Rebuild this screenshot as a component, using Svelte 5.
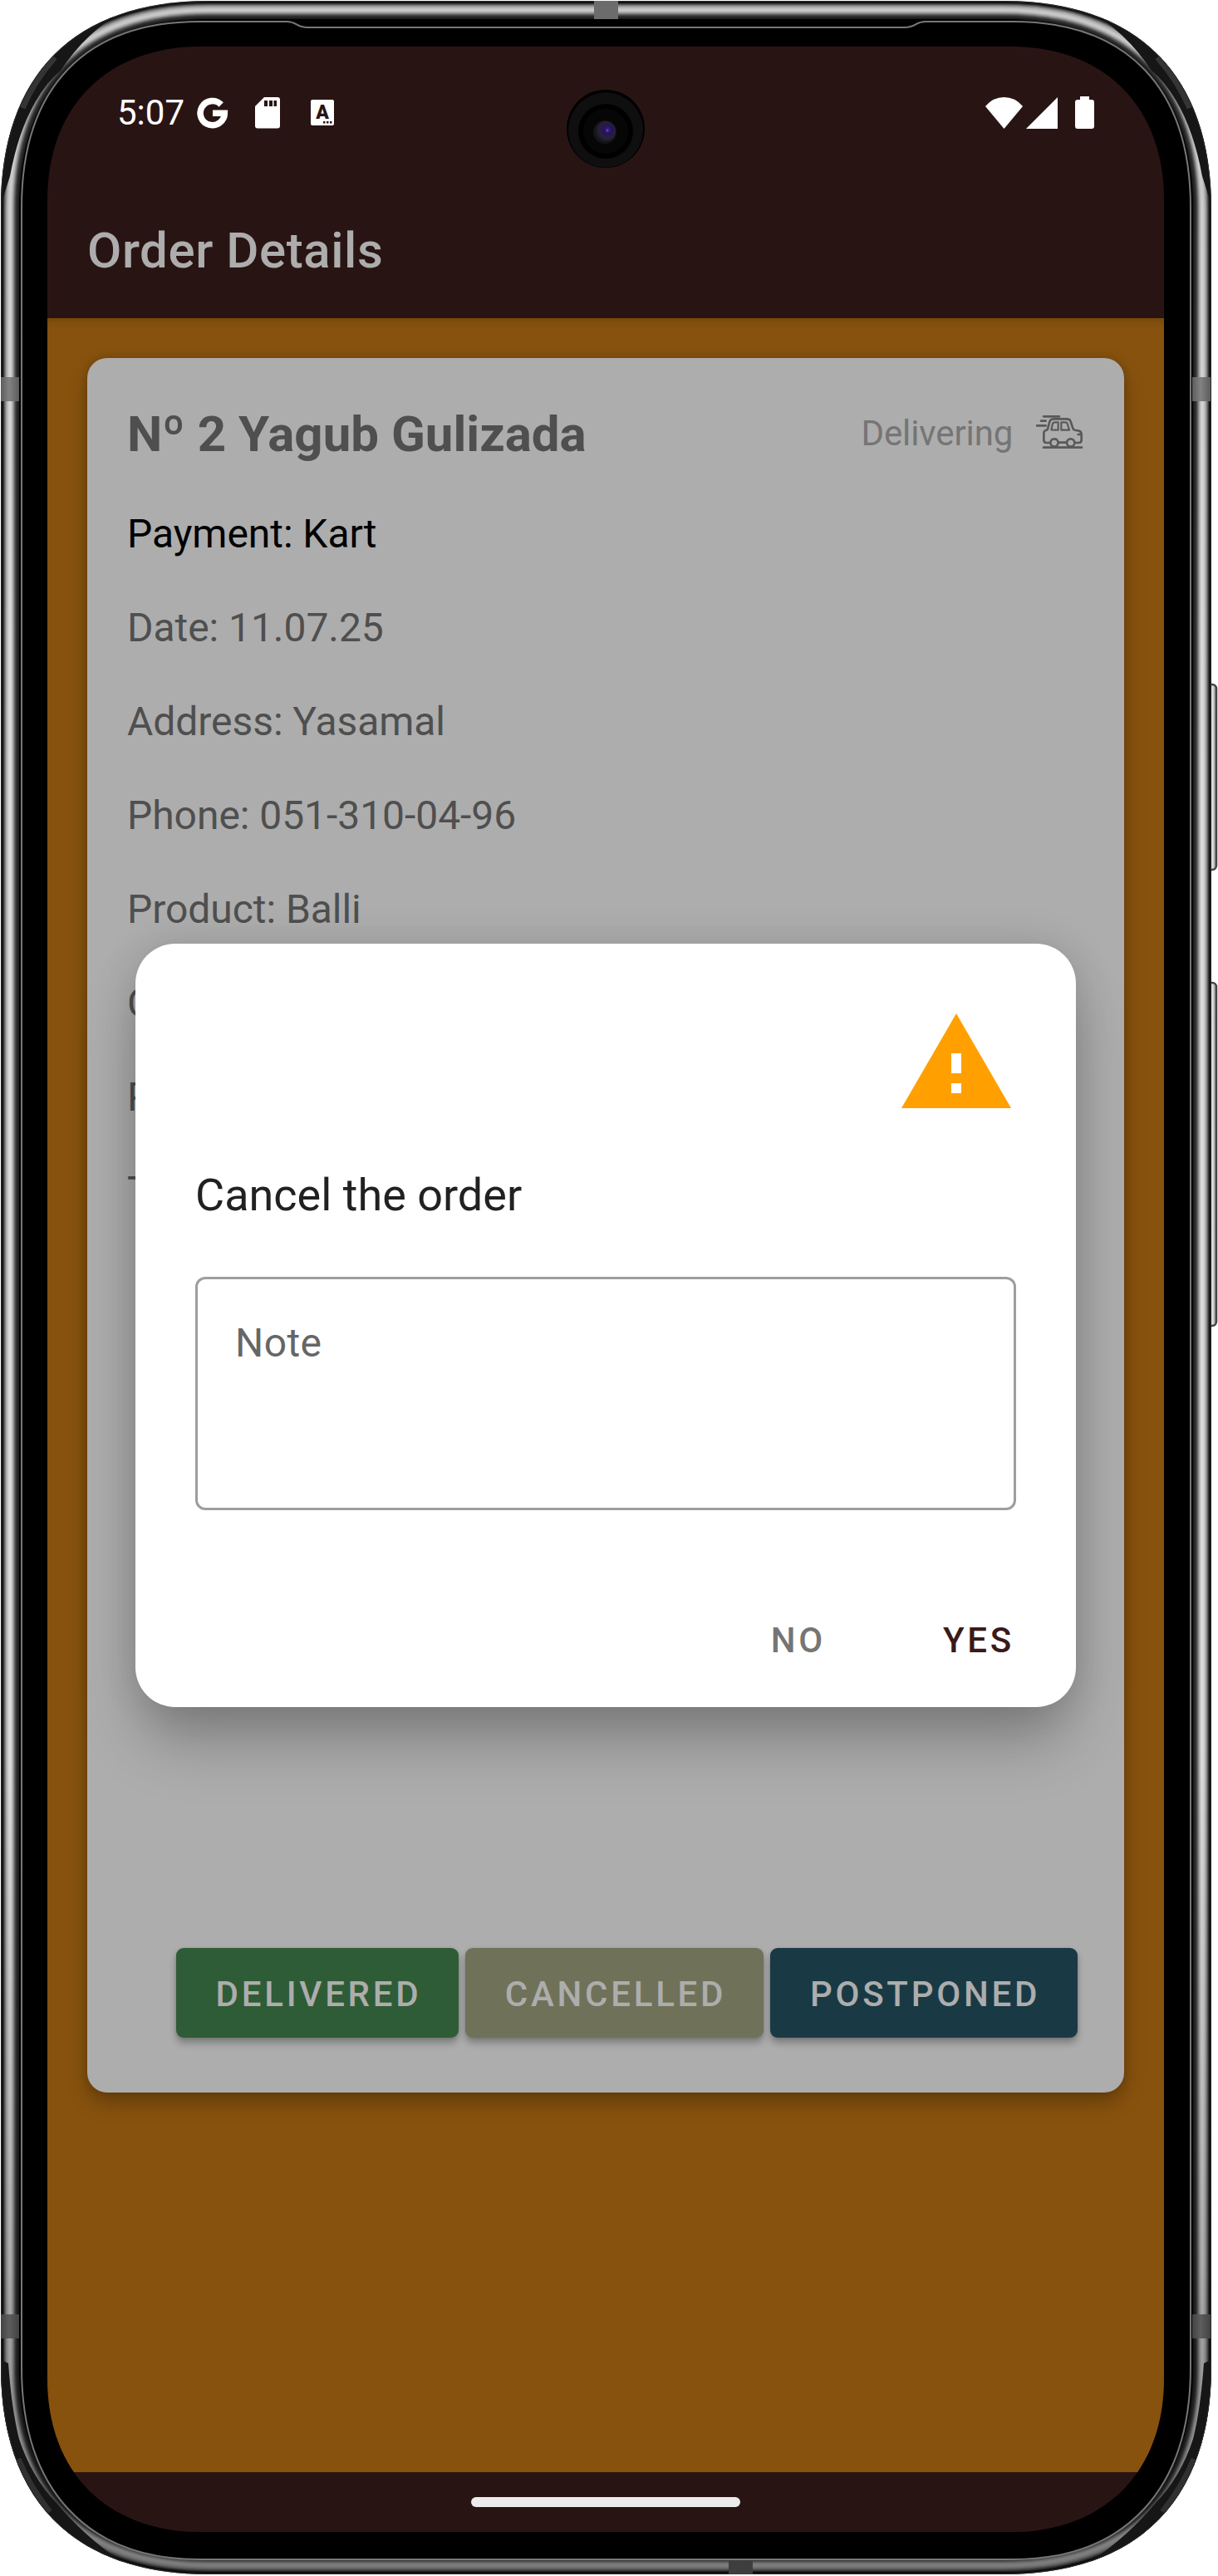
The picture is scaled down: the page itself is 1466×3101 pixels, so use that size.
<script>
  const W = 1457, H = 3098;

  // Rounded outline of the phone body, shrunk by `inset` pixels.
  function outline(inset) {
    const l = 1 + inset, t = 1 + inset, r = 1 + W - inset, b = 1 + H - inset;
    const R = 250 - inset;
    const c = R * (1 - 0.645);
    return `M${l} ${t + R}C${l} ${t + c} ${l + c} ${t} ${l + R} ${t}H${r - R}C${r - c} ${t} ${r} ${t + c} ${r} ${t + R}V${b - R}C${r} ${b - c} ${r - c} ${b} ${r - R} ${b}H${l + R}C${l + c} ${b} ${l} ${b - c} ${l} ${b - R}Z`;
  }

  const shades = [
    '#4a4a4a', '#0e0e0e', '#1d1d1d', '#3d3d3d', '#636363', '#858585', '#a2a2a2', '#b8b8b8',
    '#c8c8c8', '#d4d4d4', '#dadada', '#dcdcdc', '#d2d2d2', '#c0c0c0', '#a8a8a8', '#8a8a8a',
    '#6a6a6a', '#4d4d4d', '#383838', '#2c2c2c', '#262626', '#1c1c1c', '#000000'
  ];
  const ring = outline(0) + outline(22);
  const bands = [[1, 454, 1], [1435, 454, 1], [1, 2786, 0.72], [1435, 2786, 0.72]];

  const details = ['Date: 11.07.25', 'Address: Yasamal', 'Phone: 051-310-04-96', 'Product: Balli', 'C', 'P', 'T'];
</script>

<div class="phone">
  <svg class="frame" viewBox="0 0 1466 3101" aria-hidden="true">
    <defs>
      <linearGradient id="fade" x1="0" y1="0" x2="0" y2="1">
        <stop offset="0" stop-color="#000" stop-opacity=".09" />
        <stop offset=".3" stop-color="#000" stop-opacity="0" />
        <stop offset=".68" stop-color="#000" stop-opacity="0" />
        <stop offset=".88" stop-color="#000" stop-opacity=".22" />
        <stop offset="1" stop-color="#000" stop-opacity=".44" />
      </linearGradient>
      <linearGradient id="key" x1="0" y1="0" x2="1" y2="0">
        <stop offset="0" stop-color="#b8b8b8" />
        <stop offset=".75" stop-color="#dcdcdc" />
        <stop offset="1" stop-color="#777" />
      </linearGradient>
      <linearGradient id="band" x1="0" y1="0" x2="1" y2="0">
        <stop offset="0" stop-color="#5c5c5c" />
        <stop offset=".45" stop-color="#828282" />
        <stop offset="1" stop-color="#5c5c5c" />
      </linearGradient>
      <clipPath id="ringclip"><path d={ring} clip-rule="evenodd" /></clipPath>
      <g id="dark">
        <path d="M0 0H170L150 12Q104 38 73 85Q57 98 43 122Q22 158 12 212L0 250Z" fill="#161616" />
        <path d="M66 69Q42 96 27 130" fill="none" stroke="#343434" stroke-width="7" />
      </g>
      <g id="darklow">
        <path d="M0 0H190L150 14Q104 44 68 87Q38 118 23 164Q14 200 10 255L0 260Z" fill="#161616" />
        <path d="M60 76Q36 106 22 140" fill="none" stroke="#303030" stroke-width="7" />
      </g>
      <radialGradient id="lens" cx=".6" cy=".42" r=".6">
        <stop offset="0" stop-color="#3a1f96" />
        <stop offset=".35" stop-color="#231650" />
        <stop offset=".7" stop-color="#2c1e3e" />
        <stop offset="1" stop-color="#151d24" />
      </radialGradient>
    </defs>
    <g fill="url(#key)" stroke="#454545" stroke-width="2.5">
      <rect x="1448" y="824" width="16" height="223" rx="5" />
      <rect x="1448" y="1183" width="16" height="413" rx="5" />
    </g>
    {#each shades as shade, i}
      <path d={outline(i)} fill={shade} />
    {/each}
    <path d={ring} fill="url(#fade)" fill-rule="evenodd" />
    <g clip-path="url(#ringclip)">
      <use href="#dark" />
      <use href="#dark" transform="translate(1459 0) scale(-1 1)" />
      <use href="#darklow" transform="translate(0 3100) scale(1 -1)" />
      <use href="#darklow" transform="translate(1459 3100) scale(-1 -1)" />
    </g>
    <path d={outline(0.5)} fill="none" stroke="#2a2a2a" />
    {#each bands as [x, y, light]}
      <rect {x} {y} width="22" height="29" fill="#000" />
      <rect {x} {y} width="22" height="29" fill="url(#band)" opacity={light} />
    {/each}
    <rect x="715" y="1" width="29" height="22" fill="#6c6c6c" />
    <rect x="877" y="3083" width="29" height="16" fill="#3e3e3e" />
    <path
      d="M26 250C26 104 104 26 240 26H345C358 26 356 33 370 33H1089C1103 33 1101 26 1114 26H1219C1355 26 1433 104 1433 250V2850C1433 2996 1355 3081 1219 3081H240C104 3081 26 2996 26 2850Z"
      fill="#000" stroke="#777" stroke-width="2" />
  </svg>

  <main class="screen">
    <header>
      <div class="status">
        <span class="clock">5:07</span>
        <svg class="g" width="38" height="38" viewBox="237 117 38 38"><path d="M266.2 126A14.6 14.6 0 1 0 270.3 136.3H256" fill="none" stroke="#fff" stroke-width="7.6" /></svg>
        <svg class="sd" width="30" height="38" viewBox="307 117 30 38"><path d="M318 117H334Q337 117 337 120V151.500Q337 154.500 334 154.500H310Q307 154.500 307 151.500V128Z" fill="#fff" /><path d="M318 121h4v7h-4zM324 121h4v7h-4zM329.500 121h3.500v7h-3.500z" fill="#291414" /></svg>
        <svg class="lang" width="28" height="31" viewBox="0 0 28 31"><rect width="28" height="31" rx="2" fill="#fff" /><text x="14" y="23" text-anchor="middle">A</text><path d="M15 26h2.500v2.500h-2.500zM19 26h2.500v2.500h-2.500zM23 26h2.500v2.500h-2.500z" fill="#291414" /></svg>
        <span class="grow"></span>
        <svg class="wifi" width="45" height="38" viewBox="0 0 45 38"><path d="M22.500 38L0 11Q9 0 22.500 0T45 11Z" fill="#fff" /></svg>
        <svg class="cell" width="38" height="38" viewBox="0 0 38 38"><path d="M0 38L38 0V38Z" fill="#fff" /></svg>
        <svg width="23" height="39" viewBox="0 0 23 39"><path d="M6 0H17V4H20Q23 4 23 7V36Q23 39 20 39H3Q0 39 0 36V7Q0 4 3 4H6Z" fill="#fff" /></svg>
      </div>
      <h1>Order Details</h1>
    </header>

    <section class="body">
      <article class="card">
        <div class="top">
          <h2>Nº 2 Yagub Gulizada</h2>
          <span class="state">Delivering</span>
          <svg class="car" width="56.700" height="42" viewBox="801 174 170 126">
            <g fill="none" stroke="#595959" stroke-width="8" stroke-linecap="round" stroke-linejoin="round">
              <path d="M828 181H885M819 197H836M804 214H836M828 293H966" />
              <path d="M850 276H838Q829 275 829 266V240Q829 233 842 229L850 200Q853 190 866 190H912Q922 190 925 197L935 226Q938 231 953 232Q965 234 965 246V266Q965 275 956 276H943M885 275H908M953 246h10" />
              <circle cx="867" cy="276" r="14" /><circle cx="926" cy="276" r="14" />
              <path stroke-width="6.5" d="M856 229L861 207Q863 202 869 202H881V230ZM892 202H907Q912 202 914 207L921 230H892Z" />
            </g>
          </svg>
        </div>
        <p class="row pay">Payment: Kart</p>
        {#each details as line}
          <p class="row">{line}</p>
        {/each}
        <div class="buttons">
          <button class="delivered">DELIVERED</button>
          <button class="cancelled">CANCELLED</button>
          <button class="postponed">POSTPONED</button>
        </div>
      </article>
    </section>

    <nav><span></span></nav>

    <div class="dialog">
      <svg class="warn" width="144" height="144" viewBox="0 0 24 24"><path d="M1 21h22L12 2 1 21zm12-3h-2v-2h2v2zm0-4h-2v-4h2v4z" fill="#ffa000" /></svg>
      <h3>Cancel the order</h3>
      <div class="field">Note</div>
      <div class="actions"><span class="no">NO</span><span class="yes">YES</span></div>
    </div>

    <svg class="camera" width="96" height="96" viewBox="-48 -48 96 96">
      <circle r="47" fill="#000" /><circle r="45" cy="1.500" fill="#0f0f0f" />
      <circle r="33" cy="3" fill="#000" /><circle r="27" cy="3" fill="#060606" />
      <circle r="14" cy="4" cx="-1" fill="#141414" /><circle r="12" cy="3" fill="url(#lens)" /><circle cx="2" cy="2" r="1.500" fill="#5a40d8" />
    </svg>
  </main>
</div>

<style>
  :global(body) { margin: 0; background: #fff; }
  .phone {
    position: relative;
    box-sizing: border-box;
    width: 1466px;
    height: 3101px;
    padding: 56px 65px 53px 57px;
    overflow: hidden;
    font-family: Roboto, "Liberation Sans", sans-serif;
  }
  .frame { position: absolute; left: 0; top: 0; width: 1466px; height: 3101px; }
  .screen {
    position: relative;
    display: flex;
    flex-direction: column;
    width: 1344px;
    height: 2992px;
    background: #291414;
    clip-path: path("M0 185C0 72 72 0 185 0H1159C1272 0 1344 72 1344 185V2807C1344 2920 1272 2992 1159 2992H185C72 2992 0 2920 0 2807Z");
  }
  h1, h2, h3, p { margin: 0; }
  svg { display: block; flex: none; }
  header { height: 327px; }
  .status { display: flex; align-items: center; height: 159px; padding: 0 84px 0 84px; }
  .clock { width: 96px; font-size: 42px; color: #fff; white-space: nowrap; }
  .sd { margin-left: 32px; }
  .lang { margin-left: 37px; }
  .lang text { font: 900 23px Roboto, sans-serif; fill: #291414; }
  .grow { flex: 1; }
  .wifi { margin-right: 4px; }
  .cell { margin-right: 21px; }
  h1 { padding: 6px 48px 0; font-size: 60px; line-height: 162px; font-weight: 500; color: #adadad; letter-spacing: .55px; }
  .body { flex: 1; padding: 48px; background: #87520e; box-shadow: inset 0 10px 12px -8px rgba(0, 0, 0, .18); }
  .card {
    box-sizing: border-box;
    display: flex;
    flex-direction: column;
    height: 2088px;
    padding: 48px 48px 66px;
    border-radius: 24px;
    background: #adadad;
    box-shadow: 0 12px 24px rgba(0, 0, 0, .25), 0 0 10px rgba(0, 0, 0, .15);
  }
  .top { display: flex; align-items: center; height: 87px; margin-bottom: 20px; }
  h2 { flex: 1; font-size: 60px; line-height: 87px; font-weight: 700; color: #4f4f4f; }
  .state { margin: -3px 28px 0 0; font-size: 42px; color: #757575; letter-spacing: -.1px; }
  .car { margin: -6px 1px 0 0; }
  .row { height: 113px; line-height: 113px; font-size: 48px; color: #4f4f4f; letter-spacing: -.05px; }
  .pay { color: #000; }
  .buttons { display: flex; justify-content: flex-end; gap: 8px; margin: auto 8px 0 0; }
  button {
    height: 108px;
    border: 0;
    padding: 2px 0 0 3px;
    border-radius: 9px;
    font: 500 42px Roboto, "Liberation Sans", sans-serif;
    letter-spacing: 3.75px;
    color: #adadad;
    box-shadow: 0 7px 9px rgba(0, 0, 0, .24), 0 1px 5px rgba(0, 0, 0, .14);
  }
  .delivered { width: 340px; background: #2e5c36; }
  .cancelled { width: 359px; background: #6f7259; }
  .postponed { width: 370px; background: #193a45; }
  nav { display: flex; align-items: center; justify-content: center; height: 72px; background: #291414; }
  nav span { width: 324px; height: 12px; border-radius: 6px; background: #ececec; }
  .dialog {
    position: absolute;
    left: 106px;
    top: 1080px;
    box-sizing: border-box;
    display: flex;
    flex-direction: column;
    width: 1132px;
    height: 919px;
    padding: 72px 72px 40px;
    border-radius: 48px;
    background: #fff;
    box-shadow: 0 48px 72px -8px rgba(0, 0, 0, .26), 0 0 48px rgba(0, 0, 0, .13);
  }
  .warn { align-self: flex-end; }
  h3 { margin-top: 55px; font-size: 54px; line-height: 64px; font-weight: 400; color: #212121; }
  .field {
    flex: none;
    box-sizing: border-box;
    height: 281px;
    margin-top: 66px;
    padding: 47px 45px;
    border: 3px solid #9e9e9e;
    border-radius: 12px;
    font-size: 48px;
    line-height: 60px;
    letter-spacing: .4px;
    color: #666;
  }
  .actions { display: flex; justify-content: flex-end; margin: 127px 2px 0 0; font-size: 42px; line-height: 60px; font-weight: 500; letter-spacing: 3.750px; }
  .no { margin-right: 141px; color: #757575; }
  .yes { color: #3a1a1a; }
  .camera { position: absolute; left: 624px; top: 51px; }
</style>
